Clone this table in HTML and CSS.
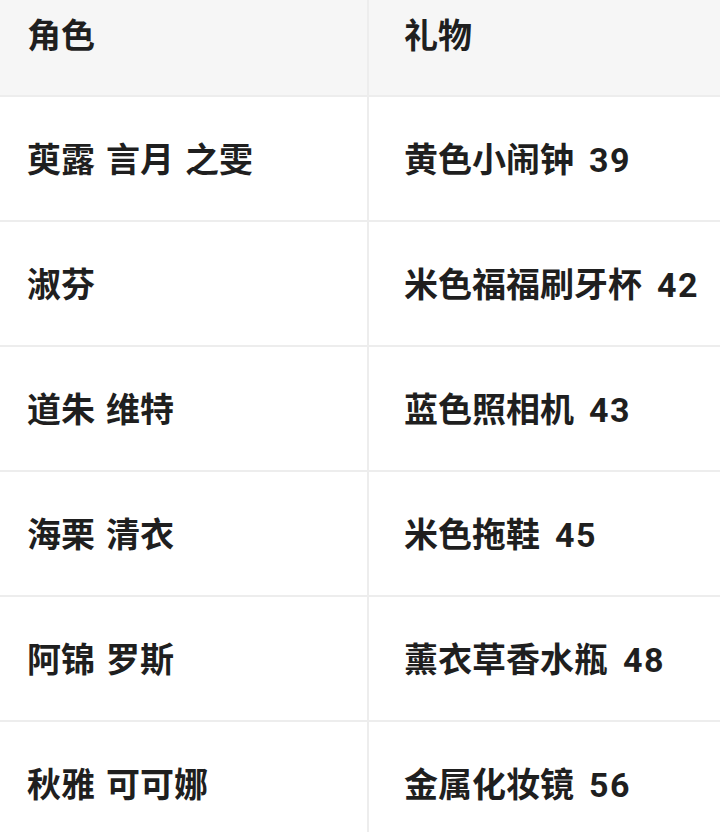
FILE: index.html
```html
<!DOCTYPE html>
<html lang="zh">
<head>
<meta charset="utf-8">
<link rel="stylesheet" href="styles.css">
</head>
<body>
<table class="gift-table">
  <thead>
    <tr><th class="col-role">角色</th><th class="col-gift">礼物</th></tr>
  </thead>
  <tbody>
    <tr><td class="col-role">萸露 言月 之雯</td><td class="col-gift">黄色小闹钟<span class="num">39</span></td></tr>
    <tr><td class="col-role">淑芬</td><td class="col-gift">米色福福刷牙杯<span class="num">42</span></td></tr>
    <tr><td class="col-role">道朱 维特</td><td class="col-gift">蓝色照相机<span class="num">43</span></td></tr>
    <tr><td class="col-role">海栗 清衣</td><td class="col-gift">米色拖鞋<span class="num">45</span></td></tr>
    <tr><td class="col-role">阿锦 罗斯</td><td class="col-gift">薰衣草香水瓶<span class="num">48</span></td></tr>
    <tr><td class="col-role">秋雅 可可娜</td><td class="col-gift">金属化妆镜<span class="num">56</span></td></tr>
  </tbody>
</table>
</body>
</html>
```

FILE: styles.css
```css
html, body {
  margin: 0;
  padding: 0;
  background: #ffffff;
}
body {
  width: 720px;
  height: 832px;
  overflow: hidden;
  font-family: Roboto, "Noto Sans CJK SC", sans-serif;
  color: #1f1f1f;
}
.gift-table {
  width: 720px;
  border-collapse: collapse;
  table-layout: fixed;
}
.gift-table th,
.gift-table td {
  font-size: 34px;
  font-weight: 700;
  text-align: left;
  line-height: 40px;
  white-space: nowrap;
  word-spacing: 2.5px;
  padding: 0;
  border-bottom: 2px solid #ededed;
}
.gift-table th {
  background: #f6f6f6;
  height: 96px;
  vertical-align: top;
  padding-top: 16px;
  box-sizing: border-box;
}
.gift-table td {
  height: 125px;
  box-sizing: border-box;
  vertical-align: middle;
  padding-top: 3px;
}
.col-role {
  width: 368px;
  padding-left: 27px !important;
  border-right: 2px solid #ededed;
}
.col-gift {
  padding-left: 35px !important;
}
.num {
  padding-left: 15px;
  letter-spacing: 1.5px;
}
```
